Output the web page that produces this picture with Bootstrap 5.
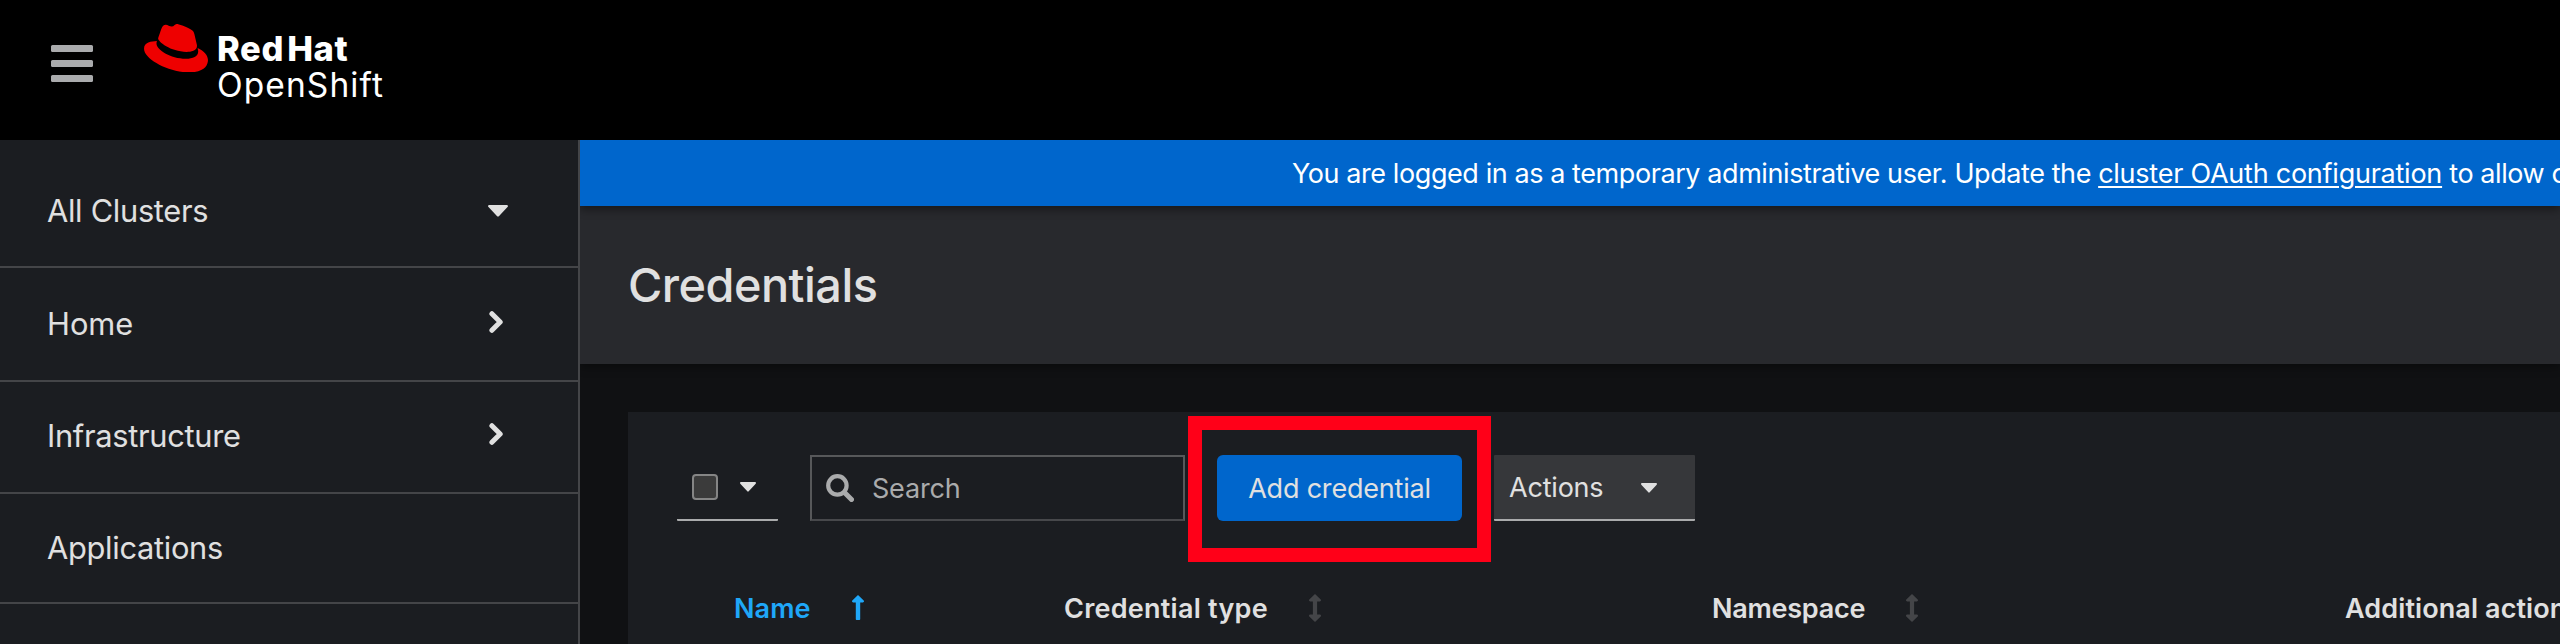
<!DOCTYPE html>
<html lang="en">
<head>
<meta charset="utf-8">
<title>Credentials · Red Hat OpenShift</title>
<meta name="viewport" content="width=device-width, initial-scale=1">
<link rel="stylesheet" href="https://cdn.jsdelivr.net/npm/bootstrap@5.3.0/dist/css/bootstrap.min.css">
<style>
body { font-family: Inter, Roboto, "Liberation Sans", sans-serif; font-size: 27px; line-height: 42px; color: #e0e0e0; background: #101113; height: 644px; overflow: hidden; letter-spacing: -.2px; }
svg { display: block; flex: none; }
.masthead { height: 140px; background: #000; padding-left: 51px; }
.burger { width: 42px; margin-top: 45px; gap: 8px; }
.burger span { height: 7px; border-radius: 1.5px; background: #aaabad; }
.brand { margin: 24px 0 0 51px; gap: 9px; color: #fff; text-decoration: none; }
.brand-text { line-height: 37px; padding-top: 6px; white-space: nowrap; }
.brand-text strong { font-size: 34.5px; font-weight: 800; letter-spacing: .6px; word-spacing: -5px; }
.brand-text span { font-size: 33.5px; letter-spacing: 1.1px; }
.shell { height: 504px; }
.side { width: 580px; flex: none; background: #1b1d21; border-right: 2px solid #444548; font-size: 30.8px; letter-spacing: -.3px; }
.side a { color: #e0e0e0; text-decoration: none; border-bottom: 2px solid #444548; padding: 0 70px 0 47px; }
.side .switcher { height: 128px; padding-top: 15px; }
.side .h-home { height: 114px; letter-spacing: 0; }
.side .h-infra { height: 112px; padding-bottom: 3px; }
.side .h-apps { height: 110px; }
.chev { margin-right: 5px; margin-top: -4px; }
.main { min-width: 0; overflow: hidden; }
.notice { height: 66px; background: #06c; color: #fff; padding: 2px 0 0 712px; white-space: nowrap; letter-spacing: -.42px; box-shadow: 0 3px 9px rgba(0,0,0,.45); z-index: 2; }
.notice a { color: #fff; letter-spacing: -.24px; text-decoration-thickness: 2px; text-underline-offset: 3px; }
.titlebar { height: 158px; background: #28292d; padding-left: 48px; box-shadow: 0 3px 9px rgba(0,0,0,.4); z-index: 1; }
.titlebar h1 { font-size: 46.8px; font-weight: 500; margin: 0; letter-spacing: -.5px; }
.panel { margin: 48px 0 0 48px; height: 232px; background: #1b1d21; padding-top: 43px; }
.tools { padding-left: 49px; gap: 32px; }
.tools > * { height: 66px; flex: none; }
.picker { width: 101px; border-bottom: 2px solid #aaabac; border-radius: 1px; padding-left: 15px; gap: 22px; }
.tick { width: 26px; height: 26px; border: 2px solid #858585; border-radius: 4px; background: #3b3b3b; }
.find { width: 375px; border: 2px solid #57585a; border-bottom-color: #47484b; color: #aaabac; padding-left: 14px; gap: 18px; }
.find span { padding-top: 1px; }
.add { width: 245px; background: #06c; color: #e0e0e0; border-radius: 6px; padding-top: 1px; }
.ring { inset: -39px -29px -41px; border: 14px solid #ff0018; }
.act { width: 201px; background: #36373a; border-bottom: 2px solid #aaabac; border-radius: 1px; padding: 2px 38px 0 15px; }
.heads { display: grid; grid-template-columns: 330px 648px 633px 1fr; margin-left: 106px; margin-top: 67px; font-weight: 600; white-space: nowrap; letter-spacing: .1px; }
.heads svg { margin-top: -2px; }
.heads > div { gap: 41px; }
.heads .sorted { color: #1fa7f8; }
.heads .kind { letter-spacing: .25px; }
.heads .ns { letter-spacing: -.25px; }
</style>
</head>
<body>
<header class="masthead d-flex align-items-start">
  <div class="burger d-flex flex-column"><span></span><span></span><span></span></div>
  <a class="brand d-flex align-items-start" href="#">
    <svg width="64" height="48.4" viewBox="0 2.92 24 18.16" fill="#e00"><path d="M16.009 13.386c1.577 0 3.86-.326 3.86-2.202a1.765 1.765 0 0 0-.04-.431l-.94-4.08c-.216-.898-.406-1.305-1.982-2.093-1.223-.625-3.888-1.658-4.676-1.658-.733 0-.947.946-1.822.946-.842 0-1.467-.706-2.255-.706-.757 0-1.25.515-1.63 1.576 0 0-1.06 2.99-1.197 3.424a.81.81 0 0 0-.028.245c0 1.162 4.577 4.974 10.71 4.974m4.101-1.435c.218 1.032.218 1.14.218 1.277 0 1.765-1.984 2.745-4.593 2.745-5.895.004-11.06-3.451-11.06-5.734a2.326 2.326 0 0 1 .19-.925C2.746 9.415 0 9.794 0 12.217c0 3.969 9.405 8.861 16.851 8.861 5.71 0 7.149-2.582 7.149-4.62 0-1.605-1.387-3.425-3.887-4.512"/></svg>
    <div class="brand-text d-flex flex-column"><strong>Red Hat</strong><span>OpenShift</span></div>
  </a>
</header>
<div class="shell d-flex">
  <nav class="side d-flex flex-column">
    <a href="#" class="switcher d-flex align-items-center justify-content-between">All Clusters
      <svg width="20" height="12" viewBox="0 0 20 12" fill="#e0e0e0"><path d="M1.5 0h17c1.3 0 1.9 1.2 1 2.100l-8.400 8.900c-.6.700-1.600.700-2.200 0L.5 2.100C-.4 1.200.2 0 1.500 0z"/></svg></a>
    <a href="#" class="h-home d-flex align-items-center justify-content-between">Home
      <svg class="chev" width="14" height="24" viewBox="0 0 14 24" fill="none" stroke="#e0e0e0" stroke-width="5" stroke-linecap="round" stroke-linejoin="round"><path d="M2.900 3.700 11.200 12l-8.300 8.300"/></svg></a>
    <a href="#" class="h-infra d-flex align-items-center justify-content-between">Infrastructure
      <svg class="chev" width="14" height="24" viewBox="0 0 14 24" fill="none" stroke="#e0e0e0" stroke-width="5" stroke-linecap="round" stroke-linejoin="round"><path d="M2.900 3.700 11.200 12l-8.300 8.300"/></svg></a>
    <a href="#" class="h-apps d-flex align-items-center justify-content-between">Applications</a>
  </nav>
  <main class="main flex-grow-1 d-flex flex-column">
    <div class="notice position-relative d-flex align-items-center flex-shrink-0"><div>You are logged in as a temporary administrative user. Update the <a href="#">cluster OAuth configuration</a> to allow others to log in.</div></div>
    <div class="titlebar position-relative d-flex align-items-center flex-shrink-0"><h1>Credentials</h1></div>
    <section class="panel flex-shrink-0">
      <div class="tools d-flex">
        <div class="picker d-flex align-items-center"><span class="tick"></span>
          <svg width="16" height="10" viewBox="0 0 16 10" fill="#e0e0e0"><path d="M1 0h14c1 0 1.300 1 .7 1.700L8.700 9.300c-.4.500-1 .500-1.400 0L.3 1.700C-.3 1 0 0 1 0z"/></svg></div>
        <div class="find d-flex align-items-center">
          <svg width="28" height="28" viewBox="0 0 28 28" fill="none" stroke="#aaabac"><circle cx="11.400" cy="11.400" r="9.200" stroke-width="4.200"/><path d="m18.500 18.500 7 7" stroke-width="5" stroke-linecap="round"/></svg>
          <span>Search</span></div>
        <div class="add position-relative d-flex align-items-center justify-content-center">Add credential<span class="ring position-absolute"></span></div>
        <div class="act d-flex align-items-center justify-content-between">Actions
          <svg width="16" height="10" viewBox="0 0 16 10" fill="#e0e0e0"><path d="M1 0h14c1 0 1.300 1 .7 1.700L8.700 9.300c-.4.500-1 .500-1.400 0L.3 1.700C-.3 1 0 0 1 0z"/></svg></div>
      </div>
      <div class="heads">
        <div class="sorted d-flex align-items-center">Name
          <svg width="12" height="26" viewBox="0 0 12 26" fill="#1fa7f8"><path d="M6 0l5.700 5.500c.7.700.2 1.900-.8 1.900H8.200V24c0 .6-.4 1-1 1H4.800c-.6 0-1-.4-1-1V7.400H1.100C.1 7.400-.4 6.200.3 5.500z"/></svg></div>
        <div class="kind d-flex align-items-center">Credential type
          <svg width="12" height="28" viewBox="0 0 12 28" fill="#444548"><path d="M6 0l5.700 5.500c.7.700.2 1.900-.8 1.900H8.100v13.200h2.800c1 0 1.500 1.200.8 1.900L6 28 .3 22.500c-.7-.7-.2-1.900.8-1.900h2.800V7.400H1.100C.1 7.400-.4 6.200.3 5.500z"/></svg></div>
        <div class="ns d-flex align-items-center">Namespace
          <svg width="12" height="28" viewBox="0 0 12 28" fill="#444548"><path d="M6 0l5.700 5.500c.7.700.2 1.900-.8 1.900H8.100v13.200h2.800c1 0 1.500 1.200.8 1.900L6 28 .3 22.500c-.7-.7-.2-1.900.8-1.900h2.800V7.400H1.100C.1 7.400-.4 6.200.3 5.500z"/></svg></div>
        <div>Additional actions</div>
      </div>
    </section>
  </main>
</div>
<script src="https://cdn.jsdelivr.net/npm/bootstrap@5.3.0/dist/js/bootstrap.bundle.min.js"></script>
</body>
</html>
